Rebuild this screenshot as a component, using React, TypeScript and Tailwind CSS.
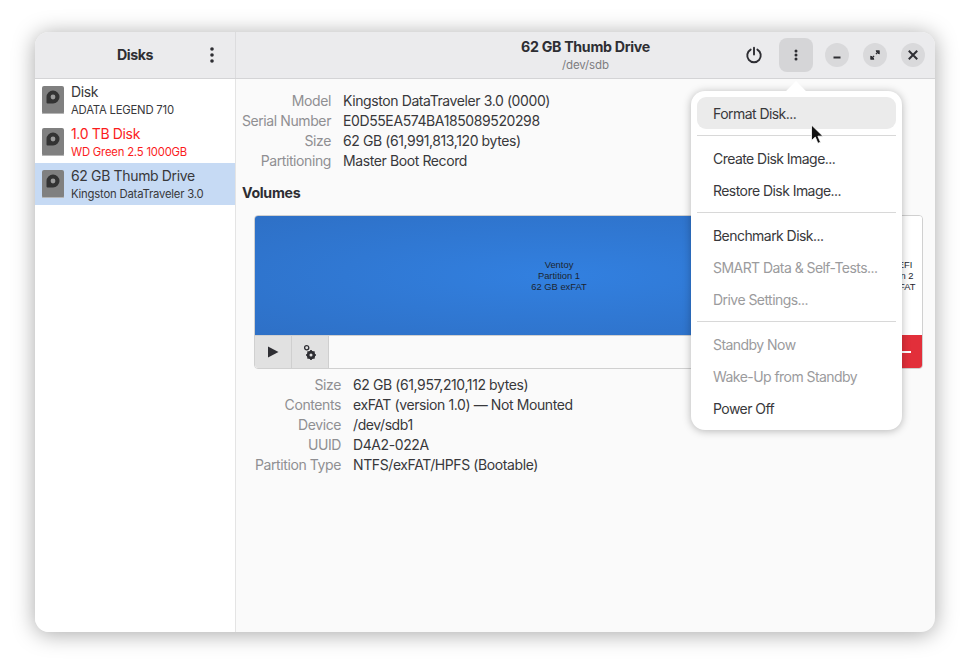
import * as React from 'react'

const font = "font-['Inter','Liberation_Sans',sans-serif]"

const DiskIcon = () => (
  <svg width="22" height="28" viewBox="0 0 22 28" className="shrink-0">
    <rect x="0" y="0" width="22" height="28" rx="2" fill="#808080" />
    <rect x="0" y="27" width="22" height="1" fill="#b5b5b5" />
    <path d="M11 4.5a6.5 6.5 0 0 1 0 13H5.5a1 1 0 0 1-1-1V11A6.5 6.5 0 0 1 11 4.5z" fill="#333" />
    <circle cx="11" cy="11" r="2.4" fill="#9a9a9a" />
  </svg>
)

const Kebab = () => (
  <svg width="4" height="18" viewBox="0 0 4 18" className="block">
    <circle cx="2" cy="3" r="1.8" fill="#2e2e33" />
    <circle cx="2" cy="9" r="1.8" fill="#2e2e33" />
    <circle cx="2" cy="15" r="1.8" fill="#2e2e33" />
  </svg>
)

const disks = [
  { name: 'Disk', model: 'ADATA LEGEND 710', red: false, selected: false },
  { name: '1.0 TB Disk', model: 'WD Green 2.5 1000GB', red: true, selected: false },
  { name: '62 GB Thumb Drive', model: 'Kingston DataTraveler 3.0', red: false, selected: true },
]

const DetailRows = ({ rows, labelWidth }: { rows: string[][]; labelWidth: string }) => (
  <div className="flex flex-col">
    {rows.map(([label, value]) => (
      <div key={label} className="flex h-5 items-center gap-3 whitespace-nowrap text-[14px] tracking-[-0.4px]">
        <span className={`${labelWidth} flex shrink-0 justify-end text-[#8f8f92]`}>{label}</span>
        <span className="text-[#38383b]">{value}</span>
      </div>
    ))}
  </div>
)

const WindowButton = ({ children }: { children: React.ReactNode }) => (
  <div className="flex h-6 w-6 items-center justify-center rounded-full bg-[#d9d9db]">{children}</div>
)

const menuGroups = [
  [{ label: 'Format Disk...', hover: true }],
  [{ label: 'Create Disk Image...' }, { label: 'Restore Disk Image...' }],
  [{ label: 'Benchmark Disk...' }, { label: 'SMART Data & Self-Tests...', off: true }, { label: 'Drive Settings...', off: true }],
  [{ label: 'Standby Now', off: true }, { label: 'Wake-Up from Standby', off: true }, { label: 'Power Off' }],
] as { label: string; hover?: boolean; off?: boolean }[][]

const Menu = () => (
  <div className="absolute left-[656px] top-[59px] z-10 w-[211px] rounded-[14px] bg-white p-[6px] shadow-[0_1px_8px_rgba(0,0,0,0.28)]">
    <div className="absolute left-[98px] top-[-7px] h-[14px] w-[14px] rotate-45 bg-white" />
    <div className="relative flex flex-col">
      {menuGroups.map((group, i) => (
        <div key={i} className={i > 0 ? 'mt-[6px] border-t border-[#d8d8d8] pt-[6px]' : ''}>
          {group.map(item => (
            <div
              key={item.label}
              className={`flex h-8 items-center whitespace-nowrap rounded-[9px] px-4 text-[14px] tracking-[-0.55px] ${item.hover ? 'bg-[#ebebeb]' : ''} ${item.off ? 'text-[#9b9b9d]' : 'text-[#38383b]'}`}
            >
              {item.label}
            </div>
          ))}
        </div>
      ))}
    </div>
  </div>
)

const Cursor = () => (
  <svg width="14" height="22" viewBox="0 0 14 22" className="absolute left-[775px] top-[92px] z-20">
    <path d="M1.5 1v15.5l3.8-3.4 2.6 6.2 2.6-1.1-2.6-6h5L1.5 1z" fill="#111" stroke="#fff" strokeWidth="0.8" />
  </svg>
)

export default function App() {
  return (
    <div className={`${font} h-[670px] w-[970px] overflow-hidden bg-white pl-[35px] pt-[32px]`}>
      <div className="relative flex h-[600px] w-[900px] flex-col rounded-[14px] bg-[#fafafa] shadow-[0_2px_22px_rgba(0,0,0,0.35)]">
        {/* header */}
        <div className="flex h-[47px] shrink-0 rounded-t-[14px] border-b border-[#d4d4d6] bg-[#ebebed]">
          <div className="relative flex w-[201px] shrink-0 items-center justify-center border-r border-[#dcdcde]">
            <span className="text-[14.2px] font-bold tracking-[-0.45px] text-[#2e2e33]">Disks</span>
            <div className="absolute left-[175px] top-[14px]">
              <Kebab />
            </div>
          </div>
          <div className="relative flex flex-1 items-center justify-center">
            <div className="flex flex-col items-center">
              <span className="text-[14.2px] font-bold leading-[20px] tracking-[-0.3px] text-[#2e2e33]">62 GB Thumb Drive</span>
              <span className="text-[11.5px] leading-[16px] tracking-[-0.1px] text-[#7d7d80]">/dev/sdb</span>
            </div>
            <div className="absolute right-[10px] top-[6px] flex items-center">
              <svg width="18" height="18" viewBox="0 0 16 16" fill="none" stroke="#2e2e33" strokeWidth="1.7" strokeLinecap="round" className="mr-[16px]">
                <path d="M5 3.2a6 6 0 1 0 6 0" />
                <path d="M8 1.5v6" />
              </svg>
              <div className="mr-3 flex h-[34px] w-[34px] items-center justify-center rounded-[8px] bg-[#d5d5d7]">
                <svg width="4" height="12" viewBox="0 0 4 12">
                  <circle cx="2" cy="2" r="1.5" fill="#2e2e33" />
                  <circle cx="2" cy="6" r="1.5" fill="#2e2e33" />
                  <circle cx="2" cy="10" r="1.5" fill="#2e2e33" />
                </svg>
              </div>
              <div className="flex items-center gap-[14px]">
                <WindowButton>
                  <svg width="8" height="8" viewBox="0 0 8 8"><rect x="0.5" y="5.5" width="7" height="2" fill="#2e2e33" /></svg>
                </WindowButton>
                <WindowButton>
                  <svg width="12" height="12" viewBox="0 0 12 12" fill="#2e2e33">
                    <path d="M6.5 1.5h4v4L9 4 7.5 5.5 6.5 4.5 8 3zM5.5 10.5h-4v-4L3 8l1.5-1.5 1 1L4 9z" />
                    <path d="M7 1.5h3.5V5H9V3H7zM5 10.5H1.5V7H3v2h2z" />
                  </svg>
                </WindowButton>
                <WindowButton>
                  <svg width="10" height="10" viewBox="0 0 10 10" stroke="#2e2e33" strokeWidth="2" strokeLinecap="square">
                    <path d="M1.5 1.5l7 7M8.5 1.5l-7 7" />
                  </svg>
                </WindowButton>
              </div>
            </div>
          </div>
        </div>

        <div className="flex min-h-0 flex-1">
          {/* sidebar */}
          <div className="w-[201px] shrink-0 overflow-hidden rounded-bl-[14px] border-r border-[#e4e4e4] bg-white">
            {disks.map(disk => (
              <div key={disk.name} className={`flex h-[42px] items-center gap-[7px] pl-[7px] ${disk.selected ? 'bg-[#c6daf4]' : ''}`}>
                <DiskIcon />
                <div className={`flex flex-col ${disk.red ? 'text-[#fb1c1c]' : 'text-[#38383b]'}`}>
                  <span className="text-[14px] leading-[20px] tracking-[-0.35px]">{disk.name}</span>
                  <span className="text-[11.3px] leading-[16px] tracking-[-0.2px]">{disk.model}</span>
                </div>
              </div>
            ))}
          </div>

          {/* details */}
          <div className="min-w-0 flex-1 pl-[6px] pt-[11px]">
            <DetailRows
              labelWidth="w-[89px]"
              rows={[
                ['Model', 'Kingston DataTraveler 3.0 (0000)'],
                ['Serial Number', 'E0D55EA574BA185089520298'],
                ['Size', '62 GB (61,991,813,120 bytes)'],
                ['Partitioning', 'Master Boot Record'],
              ]}
            />
            <div className="mt-[13px] text-[14.2px] font-bold leading-[20px] tracking-[-0.3px] text-[#2e2e33]">Volumes</div>
            <div className="ml-3 mt-[12px] w-[669px] overflow-hidden rounded-[4px] border border-[#d0d0d0]">
              <div className="flex h-[119px] font-['Liberation_Sans',sans-serif] text-[9.4px] leading-[11px] text-[#1c2530]">
                <div className="flex w-[608px] items-center justify-center bg-[radial-gradient(ellipse_at_center,#3280e0,#2e70c6)] text-center">
                  <div>Ventoy<br />Partition 1<br />62 GB exFAT</div>
                </div>
                <div className="flex flex-1 items-center justify-center whitespace-nowrap bg-white text-center">
                  <div>VTOYEFI<br />Partition 2<br />33 MB FAT</div>
                </div>
              </div>
              <div className="flex h-[33px] border-t border-[#d0d0d0] bg-[#fafafa]">
                <div className="flex w-[37px] items-center justify-center border-r border-[#cfcfcf] bg-[#e1e1e1]">
                  <svg width="12" height="12" viewBox="0 0 12 12"><path d="M1 0.5v11L11.5 6z" fill="#2e2e33" /></svg>
                </div>
                <div className="flex w-[37px] items-center justify-center border-r border-[#cfcfcf] bg-[#e1e1e1]">
                  <svg width="14" height="18" viewBox="0 0 14 18" fill="none" stroke="#2e2e33">
                    <circle cx="3.7" cy="4.7" r="2.1" strokeWidth="1.3" />
                    <circle cx="8" cy="12" r="2.9" strokeWidth="2.8" />
                    <path d="M8 7v1.5M8 15.5V17M3 12h1.5M11.5 12H13M4.5 8.5l1 1M10.5 14.5l1 1M11.5 8.5l-1 1M5.5 14.5l-1 1" strokeWidth="1.7" />
                  </svg>
                </div>
                <div className="flex-1" />
                <div className="-mt-px flex w-[34px] items-center justify-center bg-[#e22f3a]">
                  <div className="h-[2px] w-[12px] bg-white" />
                </div>
              </div>
            </div>
            <div className="mt-[5px] pl-[12px]">
              <DetailRows
                labelWidth="w-[87px]"
                rows={[
                  ['Size', '62 GB (61,957,210,112 bytes)'],
                  ['Contents', 'exFAT (version 1.0) — Not Mounted'],
                  ['Device', '/dev/sdb1'],
                  ['UUID', 'D4A2-022A'],
                  ['Partition Type', 'NTFS/exFAT/HPFS (Bootable)'],
                ]}
              />
            </div>
          </div>
        </div>

        <Menu />
        <Cursor />
      </div>
    </div>
  )
}
